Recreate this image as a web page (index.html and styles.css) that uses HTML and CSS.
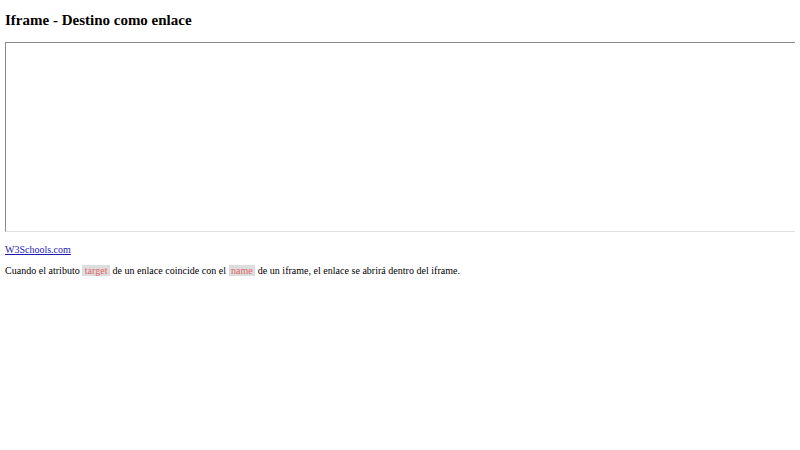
FILE: index.html
```html
<!DOCTYPE html>
<html>
<head>
<meta charset="utf-8">
<link rel="stylesheet" href="styles.css">
</head>
<body>
<h2 class="title">Iframe - Destino como enlace</h2>
<iframe class="frame" name="iframe_a" title="Iframe Example"></iframe>
<p class="link-row"><a class="link" href="#" target="iframe_a">W3Schools.com</a></p>
<p class="note">Cuando el atributo <span class="codespan">target</span> de un enlace coincide con el <span class="codespan">name</span> de un iframe, el enlace se abrirá dentro del iframe.</p>
</body>
</html>
```

FILE: styles.css
```css
html, body {
  background: #fff;
}
body {
  margin: 5px;
  font-family: "Liberation Serif", "Times New Roman", serif;
  font-size: 10px;
  color: #000;
}
.title {
  font-size: 15px;
  font-weight: bold;
  margin: 7px 0 12.5px;
}
.frame {
  display: block;
  width: 100%;
  height: 188.5px;
  border-style: solid;
  border-width: 1.25px;
  border-top-color: #8a8a8a;
  border-left-color: #8a8a8a;
  border-right-color: #e0e0e0;
  border-bottom-color: #e0e0e0;
  margin: 0;
  padding: 0;
}
.link-row {
  margin: 12px 0 10px;
}
.link {
  color: #1c1cb0;
}
.note {
  margin: 10px 0;
  letter-spacing: 0.018px;
}
.codespan {
  color: #e06666;
  background: #dddddd;
  padding: 0 2.5px;
}
```
